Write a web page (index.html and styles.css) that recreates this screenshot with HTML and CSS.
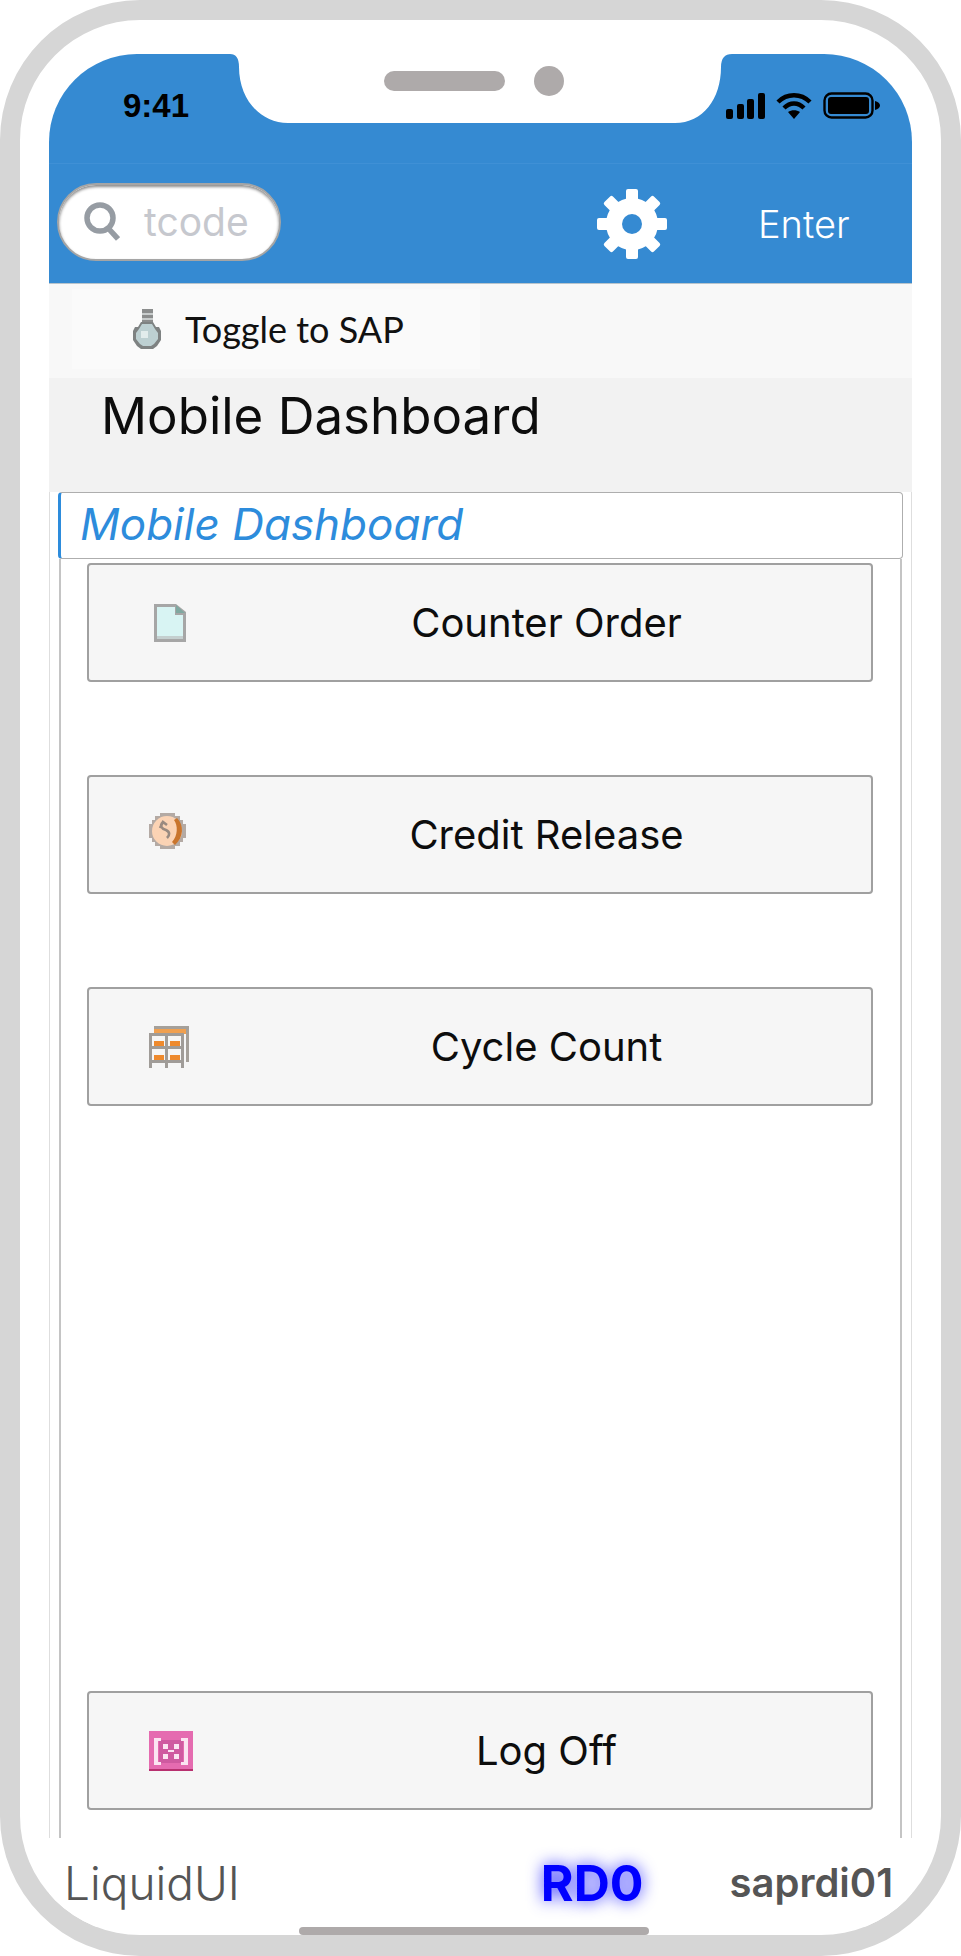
FILE: index.html
```html
<!DOCTYPE html>
<html lang="en">
<head>
  <meta charset="UTF-8">
  <meta name="viewport" content="width=device-width, initial-scale=1.0">
  <title>Mobile Dashboard</title>
  <link rel="stylesheet" href="styles.css">
</head>
<body>

  <div class="phone">

    <header class="status-bar">
      <span class="time">9:41</span>
      <svg class="notch" width="502" height="69" viewBox="0 0 502 69">
        <path d="M0 0 Q9 0 9 13 C9 45 30 69 58 69 H445 C473 69 491 45 491 13 Q491 0 502 0 Z" fill="#fff"/>
        <rect x="154" y="17" width="121" height="20" rx="10" fill="#aeaaaa"/>
        <ellipse cx="319" cy="27" rx="15" ry="15" fill="#aeaaaa"/>
      </svg>
      <div class="status-icons">
        <svg width="39" height="26" viewBox="0 0 39 26">
          <rect x="0" y="16" width="7" height="10" rx="2"/>
          <rect x="11" y="11" width="7" height="15" rx="2"/>
          <rect x="21" y="6" width="7" height="20" rx="2"/>
          <rect x="32" y="0" width="7" height="26" rx="2"/>
        </svg>
        <svg width="36" height="26" viewBox="0 0 36 26">
          <path d="M2 9 C11 0 25 0 34 9" fill="none" stroke="#000" stroke-width="4.4"/>
          <path d="M8 15 C14 9 22 9 28 15" fill="none" stroke="#000" stroke-width="4.4"/>
          <path d="M12 19 C15.500 16.500 20.500 16.500 24 19 L18 26 Z"/>
        </svg>
        <svg width="57" height="27" viewBox="0 0 57 27">
          <rect x="1.500" y="1.500" width="48" height="24" rx="7" fill="none" stroke="#000" stroke-width="2.400"/>
          <rect x="5" y="5" width="41" height="17" rx="3"/>
          <path d="M52 9 C55 9.500 57 11.500 57 13.500 C57 15.500 55 17.500 52 18 Z"/>
        </svg>
      </div>
    </header>

    <div class="toolbar">
      <div class="search">
        <svg class="search-icon" width="36" height="39" viewBox="0 0 36 39">
          <circle cx="16" cy="16" r="13" fill="none" stroke="#969ca3" stroke-width="5.500"/>
          <path d="M24 26 L34 37" stroke="#969ca3" stroke-width="5.500" fill="none"/>
        </svg>
        <span class="search-text">tcode</span>
      </div>
      <svg class="gear" width="70" height="70" viewBox="-35 -35 70 70">
        <circle r="18" fill="none" stroke="#fff" stroke-width="16"/>
        <rect x="-6" y="-35" width="12" height="70" rx="2" fill="#fff"/>
        <rect x="-6" y="-35" width="12" height="70" rx="2" fill="#fff" transform="rotate(45)"/>
        <rect x="-6" y="-35" width="12" height="70" rx="2" fill="#fff" transform="rotate(90)"/>
        <rect x="-6" y="-35" width="12" height="70" rx="2" fill="#fff" transform="rotate(135)"/>
        <circle r="10" fill="#358ad2"/>
      </svg>
      <span class="enter">Enter</span>
    </div>

    <div class="toggle-row">
      <div class="toggle">
        <svg class="bulb" width="28" height="40" viewBox="0 0 28 40">
          <rect x="9" y="0" width="11" height="13" fill="#8b8d8d"/>
          <rect x="9" y="4" width="11" height="2" fill="#c8cccc"/>
          <rect x="9" y="9" width="11" height="2" fill="#c8cccc"/>
          <path d="M8 13 H20 L23 18 H26 L28 22 V31 L24 37 L20 40 H8 L4 37 L0 31 V22 L2 18 H5 Z" fill="#7e8282"/>
          <path d="M9 15 H19 L22 20 L25 24 V30 L21 35 L18 37 H10 L7 35 L3 30 V24 L6 20 Z" fill="#bdd0d2"/>
          <rect x="8" y="22" width="7" height="7" fill="#e2ecec"/>
        </svg>
        <span>Toggle to SAP</span>
      </div>
    </div>

    <div class="page-title">Mobile Dashboard</div>

    <section class="panel">
      <div class="panel-head">Mobile Dashboard</div>

      <div class="panel-body">
        <button class="btn">
          <svg class="icon icon-doc" width="32" height="38" viewBox="0 0 32 38">
            <path d="M0 0 H22 L32 8 V38 H0 Z" fill="#a6a6a6"/>
            <path d="M3 3 H21 V11 H29 V32 H3 Z" fill="#d8f4f3"/>
            <path d="M22 1 L31 9 H22 Z" fill="#7fa8a0"/>
            <rect x="3" y="32" width="26" height="3" fill="#c4cfcf"/>
          </svg>
          <span class="btn-label">Counter Order</span>
        </button>

        <button class="btn">
          <svg class="icon icon-coin" width="37" height="36" viewBox="0 0 37 36">
            <path d="M11 0 H26 V3 H31 V7 H34 V11 H37 V25 H34 V29 H31 V33 H26 V36 H11 V33 H6 V29 H3 V25 H0 V11 H3 V7 H6 V3 H11 Z" fill="#b4aaa4"/>
            <circle cx="18" cy="18" r="15" fill="#fbd3b4"/>
            <path d="M28 5 C35 12 35 24 26 32 L23 29 C29 23 29 12 25 7 Z" fill="#c9752d"/>
            <path d="M14 9 C10 13 13 16 17 17 C21 19 21 22 18 25 M11 15 L14 9 L18 12" fill="none" stroke="#998a80" stroke-width="2.600"/>
          </svg>
          <span class="btn-label">Credit Release</span>
        </button>

        <button class="btn">
          <svg class="icon icon-rack" width="40" height="42" viewBox="0 0 40 42">
            <rect x="5" y="0" width="35" height="3" fill="#a5a09a"/>
            <rect x="37" y="0" width="3" height="36" fill="#a5a09a"/>
            <rect x="5" y="3" width="32" height="5" fill="#f0a050"/>
            <rect x="0" y="7" width="35" height="3" fill="#a09c98"/>
            <rect x="0" y="7" width="3" height="35" fill="#a09c98"/>
            <rect x="16" y="7" width="3" height="35" fill="#a09c98"/>
            <rect x="32" y="7" width="3" height="35" fill="#a09c98"/>
            <rect x="5" y="15" width="10" height="5" fill="#ee8a2e"/>
            <rect x="21" y="15" width="10" height="5" fill="#ee8a2e"/>
            <rect x="0" y="20" width="35" height="3" fill="#a09c98"/>
            <rect x="5" y="29" width="10" height="5" fill="#ee8a2e"/>
            <rect x="21" y="29" width="10" height="5" fill="#ee8a2e"/>
            <rect x="0" y="34" width="35" height="3" fill="#a09c98"/>
          </svg>
          <span class="btn-label">Cycle Count</span>
        </button>

        <button class="btn btn-bottom">
          <svg class="icon icon-logoff" width="44" height="40" viewBox="0 0 44 40">
            <rect width="44" height="40" fill="#e56bb0"/>
            <rect y="38" width="44" height="2" fill="#b8306f"/>
            <rect x="10" y="9" width="24" height="23" fill="#cf5aa0"/>
            <path d="M12 7 H5 V34 H12 V31 H9 V10 H12 Z" fill="#fbe4f1"/>
            <path d="M32 7 H39 V34 H32 V31 H35 V10 H32 Z" fill="#fbe4f1"/>
            <rect x="14" y="13" width="5" height="5" fill="#fbe4f1"/>
            <rect x="25" y="13" width="5" height="5" fill="#fbe4f1"/>
            <rect x="14" y="23" width="5" height="5" fill="#fbe4f1"/>
            <rect x="25" y="23" width="5" height="5" fill="#fbe4f1"/>
            <rect x="19" y="19" width="6" height="2" fill="#fbe4f1"/>
          </svg>
          <span class="btn-label">Log Off</span>
        </button>
      </div>
    </section>

    <footer class="footer">
      <span class="brand">LiquidUI</span>
      <span class="system">RD0</span>
      <span class="server">saprdi01</span>
    </footer>

    <div class="home-bar"></div>
  </div>

</body>
</html>
```

FILE: styles.css
```css
* {
  box-sizing: border-box;
}

body {
  margin: 0;
  background-color: #fff;
  font-family: Inter, 'Liberation Sans', sans-serif;
}

.phone {
  width: 961px;
  height: 1956px;
  border: 20px solid #d6d6d6;
  border-bottom-width: 21px;
  border-radius: 140px;
  padding: 34px 29px 0;
  background-color: #fff;
  display: flex;
  flex-direction: column;
  overflow: hidden;
}

.status-bar {
  height: 109px;
  flex: none;
  position: relative;
  background-color: #358ad2;
  border-radius: 88px 88px 0 0;
}

.notch {
  position: absolute;
  left: 181px;
  top: 0;
}

.time {
  position: absolute;
  left: 74px;
  top: 33px;
  font-family: 'Liberation Sans', sans-serif;
  font-size: 33px;
  font-weight: bold;
  line-height: 38px;
  color: #000;
}

.status-icons {
  position: absolute;
  left: 677px;
  top: 38px;
  display: flex;
  align-items: center;
  gap: 11px;
}

.status-icons svg {
  display: block;
}

.toolbar {
  height: 121px;
  flex: none;
  display: flex;
  align-items: center;
  background-color: #358ad2;
  border-top: 1px solid #3f90d6;
  border-bottom: 1px solid #b8c4cc;
  padding-left: 8px;
}

.search {
  width: 224px;
  height: 78px;
  flex: none;
  display: flex;
  align-items: center;
  gap: 24px;
  padding-left: 25px;
  margin-top: -4px;
  background-color: #fff;
  border: 2px solid #a5a5a5;
  border-radius: 39px;
  box-shadow: inset 0 2px 3px #8a8a8a;
}

.search-text {
  font-size: 39px;
  color: #c6c8ce;
}

.gear {
  margin-left: 316px;
  flex: none;
}

.enter {
  margin-left: 91px;
  font-size: 38px;
  color: #fff;
  font-weight: 300;
}

.toggle-row {
  height: 94px;
  flex: none;
  background-color: #f8f8f8;
  padding: 5px 0 9px 23px;
}

.toggle {
  width: 408px;
  height: 100%;
  display: flex;
  align-items: center;
  gap: 24px;
  padding-left: 61px;
  background-color: #fafafa;
  font-family: Lato, sans-serif;
  font-size: 36px;
  color: #111;
}

.page-title {
  height: 114px;
  flex: none;
  background-color: #f2f2f2;
  padding: 6px 0 0 52px;
  font-size: 51px;
  line-height: 64px;
  color: #0d0d0d;
}

.panel {
  flex: 1;
  min-height: 0;
  display: flex;
  flex-direction: column;
  background-color: #fff;
  padding: 0 9px;
  border-left: 1px solid #dedede;
  border-right: 1px solid #dedede;
}

.panel-head {
  height: 67px;
  flex: none;
  margin: 0 -1px;
  padding-left: 19px;
  background-color: #fff;
  border: 1px solid #aeaeae;
  border-left: 3px solid #2d8cdc;
  border-radius: 4px;
  font-size: 44px;
  font-style: italic;
  line-height: 62px;
  color: #2d8cdc;
}

.panel-body {
  flex: 1;
  min-height: 0;
  display: flex;
  flex-direction: column;
  gap: 93px;
  padding: 4px 27px 28px 26px;
  border-left: 2px solid #c4c4c4;
  border-right: 2px solid #c4c4c4;
}

.btn {
  height: 119px;
  flex: none;
  display: grid;
  grid-template-columns: 133px 1fr;
  align-items: center;
  padding: 0;
  background-color: #f6f6f6;
  border: 2px solid #a0a0a0;
  border-radius: 4px;
  font-family: inherit;
  font-size: 40px;
  color: #0d0d0d;
}

.btn-bottom {
  margin-top: auto;
}

.btn-label {
  text-align: center;
}

.icon-doc {
  margin-left: 65px;
}

.icon-coin {
  margin-left: 60px;
  margin-top: -8px;
}

.icon-rack {
  margin-left: 60px;
}

.icon-logoff {
  margin-left: 60px;
}

.footer {
  height: 89px;
  flex: none;
  display: flex;
  align-items: center;
  background-color: #fff;
  color: #555;
}

.brand {
  margin-left: 15px;
  font-size: 46px;
  font-weight: 300;
}

.system {
  margin-left: 279px;
  padding: 0 22px;
  font-size: 50px;
  font-weight: bold;
  color: #0000ff;
  text-shadow: 0 0 16px rgba(0, 0, 255, 0.8);
}

.server {
  margin-left: 64px;
  font-size: 40px;
  font-weight: 600;
}

.home-bar {
  width: 350px;
  height: 8px;
  flex: none;
  margin-left: 250px;
  background-color: #aeaaaa;
  border-radius: 4px;
}
```
